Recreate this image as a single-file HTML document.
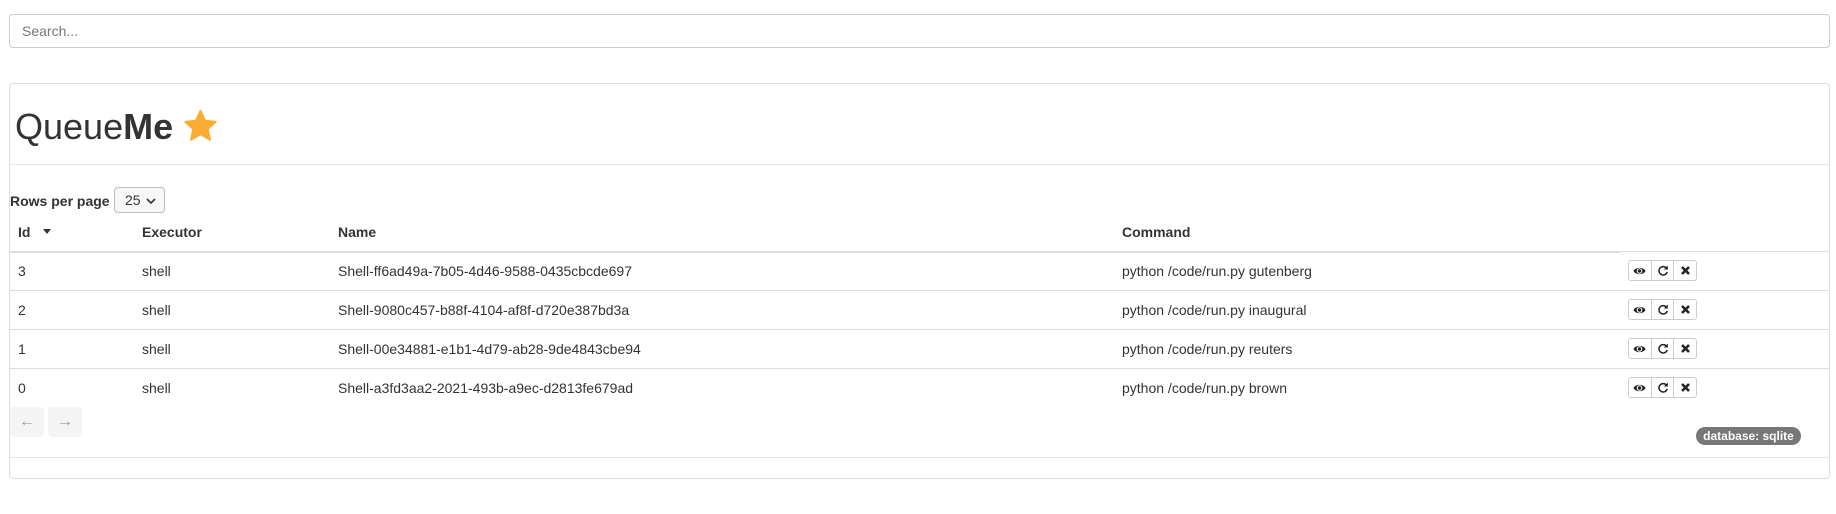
<!DOCTYPE html>
<html><head><meta charset="utf-8"><style>
*{box-sizing:border-box}
body{margin:0;width:1836px;height:514px;background:#fff;font-family:"Liberation Sans",sans-serif;font-size:14px;color:#333;position:relative;overflow:hidden}
.a{position:absolute}
.search{left:9px;top:14px;width:1821px;height:34px;border:1px solid #ccc;border-radius:4px;padding:0 12px;line-height:32px;color:#777;font-size:14px}
.card{left:9px;top:83px;width:1821px;height:396px;border:1px solid #ddd;border-radius:4px}
.hl{height:1px;background:#e5e5e5}
.th{font-weight:bold;top:224px}
.td{line-height:16px}
.btns{left:1628px;width:69px;height:21px;border:1px solid #ccc;border-radius:3px;display:flex}
.btns div{flex:1;border-left:1px solid #ccc;display:flex;align-items:center;justify-content:center}
.btns div:first-child{border-left:none}
.pg{top:407px;width:34px;height:30px;background:#f4f4f4;border-radius:4px;color:#999;text-align:center;line-height:30px;font-size:16px}
</style></head><body>
<div class="a search">Search...</div>
<div class="a card"></div>
<div class="a" style="left:15px;top:104px;font-size:36px;line-height:45px;color:#333">Queue<b>Me</b></div>
<svg class="a" style="left:182px;top:108px" width="37" height="36" viewBox="0 0 24 24"><path d="M12 1.8l3.1 6.6 7.1.8-5.3 4.9 1.5 7.1L12 17.6l-6.4 3.6 1.5-7.1-5.3-4.9 7.1-.8z" fill="#fbac32" stroke="#fbac32" stroke-width="1.2" stroke-linejoin="round"/></svg>
<div class="a hl" style="left:10px;top:164px;width:1819px"></div>
<div class="a" style="left:10px;top:193px;font-weight:bold">Rows per page</div>
<div class="a" style="left:114px;top:187px;width:51px;height:26px;border:1px solid #bbb;border-radius:4px;background:#f7f7f7;line-height:24px;padding-left:10px">25 <svg width="10" height="8" viewBox="0 0 10 8" style="margin-left:2px"><path d="M1 2l4 4 4-4" fill="none" stroke="#333" stroke-width="1.6"/></svg></div>
<div class="a th" style="left:18px">Id <svg width="10" height="6" style="margin-left:8px;vertical-align:2px"><path d="M1 0h8l-4 5z" fill="#333"/></svg></div>
<div class="a th" style="left:142px">Executor</div>
<div class="a th" style="left:338px">Name</div>
<div class="a th" style="left:1122px">Command</div>
<div class="a" style="left:10px;top:251px;width:1610px;height:2px;background:#ddd"></div>
<div class="a hl" style="left:1620px;top:251px;width:209px;background:#ddd"></div>

<div class="a hl" style="left:10px;top:290px;width:1819px;background:#ddd"></div>
<div class="a hl" style="left:10px;top:329px;width:1819px;background:#ddd"></div>
<div class="a hl" style="left:10px;top:368px;width:1819px;background:#ddd"></div>

<div class="a td" style="left:18px;top:263px">3</div><div class="a td" style="left:142px;top:263px">shell</div><div class="a td" style="left:338px;top:263px">Shell-ff6ad49a-7b05-4d46-9588-0435cbcde697</div><div class="a td" style="left:1122px;top:263px">python /code/run.py gutenberg</div>
<div class="a td" style="left:18px;top:302px">2</div><div class="a td" style="left:142px;top:302px">shell</div><div class="a td" style="left:338px;top:302px">Shell-9080c457-b88f-4104-af8f-d720e387bd3a</div><div class="a td" style="left:1122px;top:302px">python /code/run.py inaugural</div>
<div class="a td" style="left:18px;top:341px">1</div><div class="a td" style="left:142px;top:341px">shell</div><div class="a td" style="left:338px;top:341px">Shell-00e34881-e1b1-4d79-ab28-9de4843cbe94</div><div class="a td" style="left:1122px;top:341px">python /code/run.py reuters</div>
<div class="a td" style="left:18px;top:380px">0</div><div class="a td" style="left:142px;top:380px">shell</div><div class="a td" style="left:338px;top:380px">Shell-a3fd3aa2-2021-493b-a9ec-d2813fe679ad</div><div class="a td" style="left:1122px;top:380px">python /code/run.py brown</div>

<svg width="0" height="0" style="position:absolute"><defs>
<g id="eye"><path d="M0.5 5C2.5 0.8 10.5 0.8 12.5 5C10.5 9.2 2.5 9.2 0.5 5z" fill="#222"/><circle cx="6.5" cy="5" r="2.8" fill="#fff"/><circle cx="6.5" cy="5" r="1.7" fill="#222"/></g>
<g id="rf"><path d="M9.5 3.2A4.2 4.2 0 1 0 10.2 7" fill="none" stroke="#222" stroke-width="1.5"/><path d="M10.8 0.5v4h-4z" fill="#222"/></g>
<g id="x"><path d="M2 2l7 7M9 2l-7 7" stroke="#222" stroke-width="2.6"/></g>
</defs></svg>
<div class="a btns" style="top:260px"><div><svg width="13" height="10"><use href="#eye"/></svg></div><div><svg width="12" height="12"><use href="#rf"/></svg></div><div><svg width="11" height="11"><use href="#x"/></svg></div></div>
<div class="a btns" style="top:299px"><div><svg width="13" height="10"><use href="#eye"/></svg></div><div><svg width="12" height="12"><use href="#rf"/></svg></div><div><svg width="11" height="11"><use href="#x"/></svg></div></div>
<div class="a btns" style="top:338px"><div><svg width="13" height="10"><use href="#eye"/></svg></div><div><svg width="12" height="12"><use href="#rf"/></svg></div><div><svg width="11" height="11"><use href="#x"/></svg></div></div>
<div class="a btns" style="top:377px"><div><svg width="13" height="10"><use href="#eye"/></svg></div><div><svg width="12" height="12"><use href="#rf"/></svg></div><div><svg width="11" height="11"><use href="#x"/></svg></div></div>

<div class="a pg" style="left:10px">←</div>
<div class="a pg" style="left:48px">→</div>
<div class="a" style="left:1696px;top:427px;width:105px;height:18px;border-radius:9px;background:#777;color:#fff;font-weight:bold;font-size:12px;line-height:18px;text-align:center">database: sqlite</div>
<div class="a hl" style="left:10px;top:457px;width:1819px"></div>
</body></html>
